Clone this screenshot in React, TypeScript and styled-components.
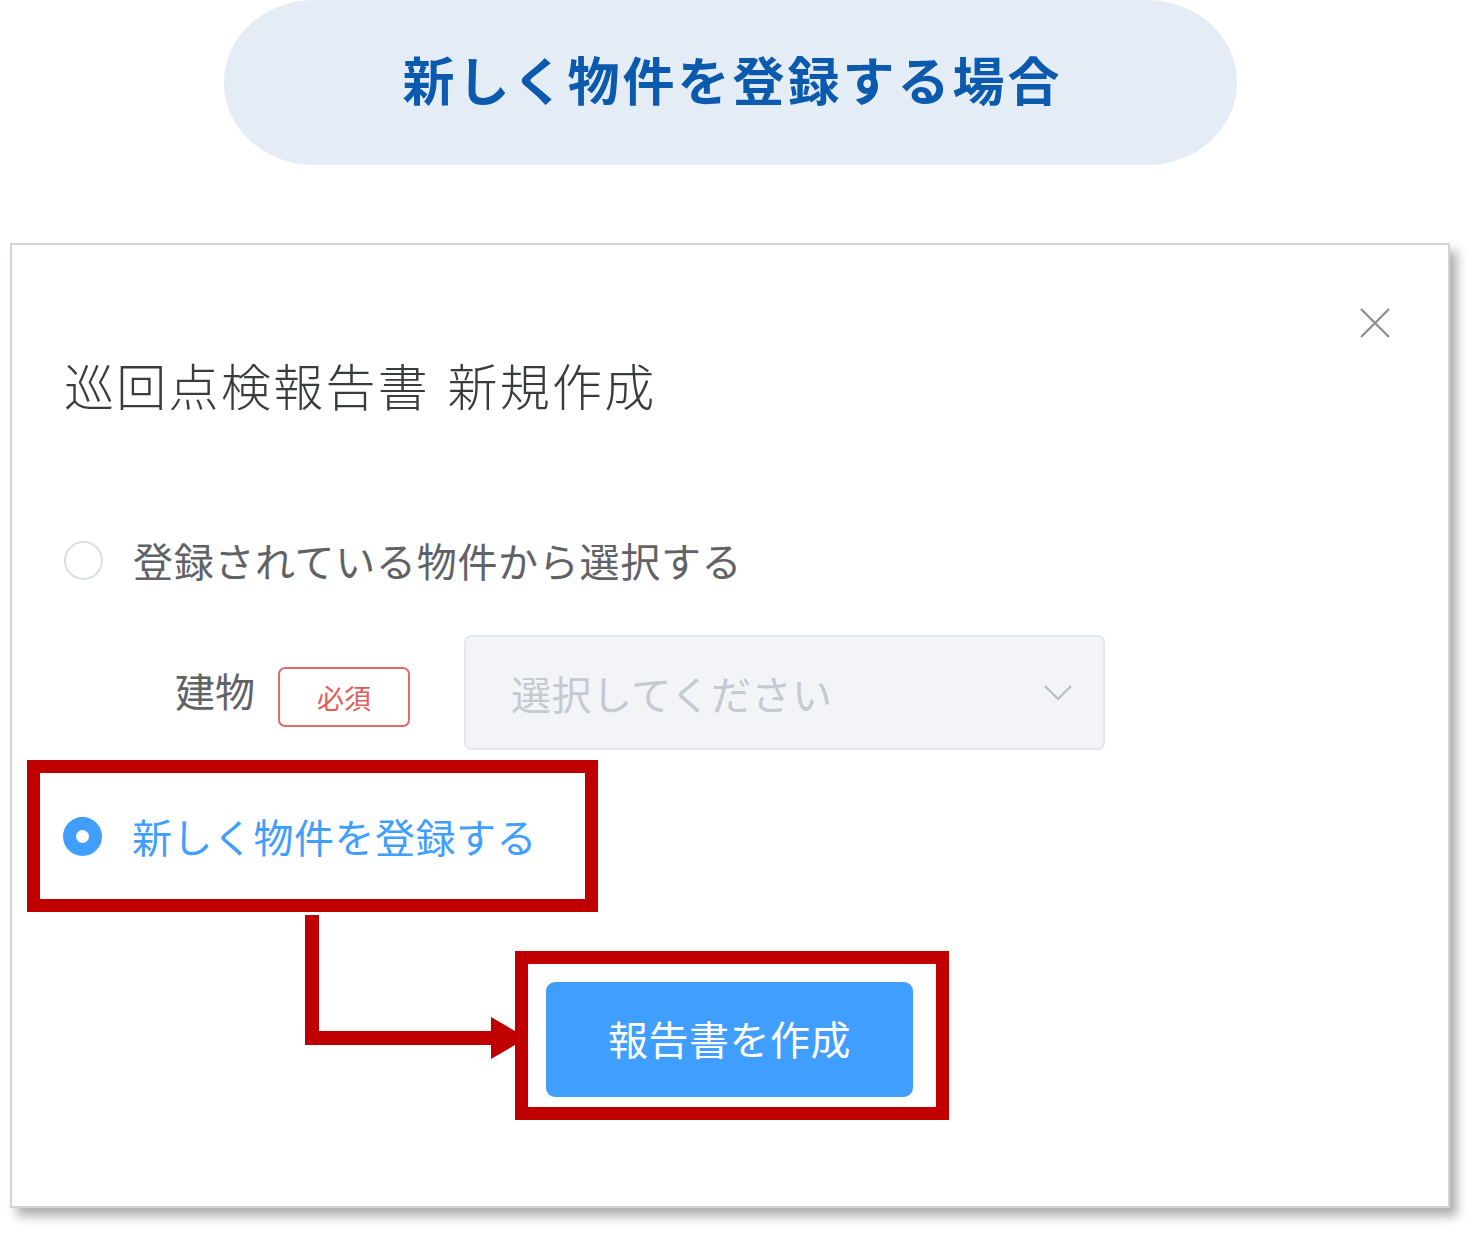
import React from "react"
import styled, { createGlobalStyle } from "styled-components"

const GlobalStyle = createGlobalStyle`
  html, body {
    margin: 0;
    padding: 0;
    background: #ffffff;
  }
  body {
    font-family: "Noto Sans CJK JP", "Noto Sans", sans-serif;
  }
  * {
    box-sizing: border-box;
  }
`

const Page = styled.div`
  width: 1480px;
  height: 1238px;
  display: flex;
  flex-direction: column;
  overflow: hidden;
`

const Heading = styled.div`
  margin-left: 224px;
  width: 1013px;
  height: 165px;
  border-radius: 90px / 82px;
  background: #e4ecf6;
  display: flex;
  align-items: center;
  justify-content: center;
  padding: 0 0 8px 4px;
  color: #0c5aae;
  font-size: 52px;
  font-weight: 700;
  letter-spacing: 3px;
  line-height: 1;
`

const Modal = styled.section`
  position: relative;
  margin: 78px 0 0 10px;
  width: 1440px;
  height: 965px;
  background: #ffffff;
  border: 2px solid #d3d3d3;
  box-shadow: 7px 8px 10px rgba(0, 0, 0, 0.32);
  display: flex;
  flex-direction: column;
  align-items: flex-start;
`

const Header = styled.header`
  width: 100%;
  display: flex;
  justify-content: space-between;
  align-items: flex-start;
  padding: 0 58px 0 52px;
`

const Title = styled.h2`
  margin: 111px 0 0;
  font-size: 50px;
  line-height: 56px;
  font-weight: 300;
  color: #3a3b3e;
  letter-spacing: 2.3px;
  word-spacing: 4px;
`

const CloseButton = styled.button`
  margin-top: 63px;
  width: 30px;
  height: 30px;
  padding: 0;
  border: none;
  background: none;
  display: flex;
`

const RadioRow = styled.label<{ active?: boolean }>`
  display: flex;
  align-items: center;
  gap: 30px;
  font-size: 40px;
  line-height: 50px;
  letter-spacing: ${({ active }) => (active ? "0.5px" : "0.7px")};
  color: ${({ active }) => (active ? "#409eff" : "#606266")};
`

const FirstOption = styled(RadioRow)`
  margin: 123px 0 0 52px;
`

const RadioDot = styled.span<{ checked?: boolean }>`
  width: 39px;
  height: 39px;
  border-radius: 50%;
  flex-shrink: 0;
  border: ${({ checked }) => (checked ? "13px solid #409eff" : "2px solid #dcdfe6")};
  background: #ffffff;
`

const FieldRow = styled.div`
  margin: 50px 0 0 163px;
  display: flex;
  align-items: center;
`

const FieldLabel = styled.span`
  font-size: 40px;
  color: #606266;
  line-height: 50px;
  width: 80px;
  margin-top: -6px;
`

const Required = styled.span`
  margin: 8px 0 0 23px;
  width: 132px;
  height: 60px;
  border: 2px solid #e26b6b;
  border-radius: 7px;
  display: flex;
  align-items: center;
  justify-content: center;
  color: #e05a5a;
  font-size: 27px;
  padding-top: 2px;
`

const Select = styled.div`
  margin-left: 54px;
  width: 641px;
  height: 115px;
  background: #f2f4f8;
  border: 2px solid #e4e7ed;
  border-radius: 7px;
  display: flex;
  align-items: center;
  justify-content: space-between;
  padding: 0 30px 0 45px;
`

const Placeholder = styled.span`
  font-size: 40px;
  color: #c5c9d1;
  letter-spacing: 0.5px;
`

const Highlight = styled.div<{ left: number; top: number }>`
  margin: ${({ top, left }) => `${top}px 0 0 ${left}px`};
  border: 13px solid #c00000;
`

const OptionBox = styled(Highlight)`
  width: 571px;
  height: 152px;
  display: flex;
  align-items: center;
  padding-left: 23px;
`

const ButtonBox = styled(Highlight)`
  width: 434px;
  height: 169px;
  padding: 18px 0 0 18px;
`

const CreateButton = styled.button`
  width: 367px;
  height: 115px;
  border: none;
  border-radius: 9px;
  background: #409eff;
  color: #ffffff;
  font-family: "Noto Sans CJK JP", sans-serif;
  font-size: 40px;
  letter-spacing: 0.5px;
  padding: 0 0 4px;
`

const Connector = styled.svg`
  position: absolute;
  left: 293px;
  top: 670px;
  overflow: visible;
`

export default function App() {
  return (
    <>
      <GlobalStyle />
      <Page>
        <Heading>新しく物件を登録する場合</Heading>
        <Modal>
          <Header>
            <Title>巡回点検報告書 新規作成</Title>
            <CloseButton aria-label="閉じる">
              <svg width="30" height="30" viewBox="0 0 30 30">
                <path d="M1 1 L29 29 M29 1 L1 29" stroke="#8e9096" strokeWidth="2.4" fill="none" />
              </svg>
            </CloseButton>
          </Header>

          <FirstOption>
            <RadioDot />
            登録されている物件から選択する
          </FirstOption>

          <FieldRow>
            <FieldLabel>建物</FieldLabel>
            <Required>必須</Required>
            <Select>
              <Placeholder>選択してください</Placeholder>
              <svg width="30" height="18" viewBox="0 0 30 18">
                <path d="M2 2 L15 15 L28 2" stroke="#b8bcc4" strokeWidth="2.2" fill="none" />
              </svg>
            </Select>
          </FieldRow>

          <OptionBox left={15} top={10}>
            <RadioRow active>
              <RadioDot checked />
              新しく物件を登録する
            </RadioRow>
          </OptionBox>

          <ButtonBox left={503} top={39}>
            <CreateButton>報告書を作成</CreateButton>
          </ButtonBox>

          {/* annotation arrow from the option to the button */}
          <Connector width="230" height="150" viewBox="0 0 230 150">
            <path d="M7 0 V123 H190" stroke="#c00000" strokeWidth="14" fill="none" />
            <polygon points="186,102 222,123 186,144" fill="#c00000" />
          </Connector>
        </Modal>
      </Page>
    </>
  )
}
